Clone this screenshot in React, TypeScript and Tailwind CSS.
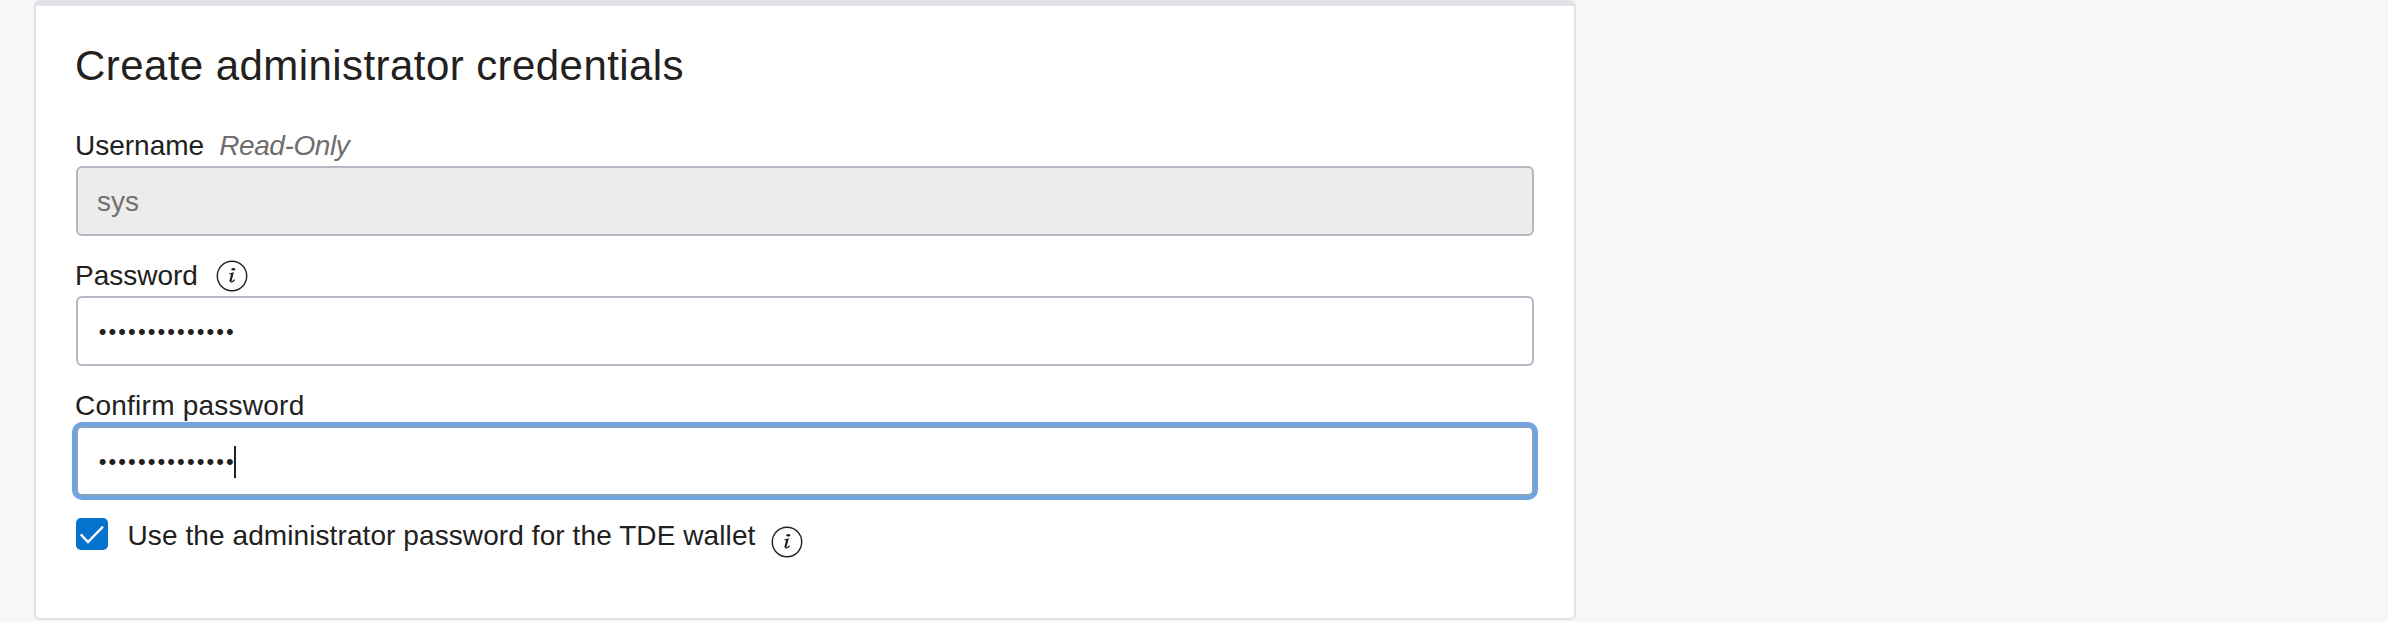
import type { ReactNode } from "react";

function InfoIcon({ className = "" }: { className?: string }) {
  return (
    <svg className={`h-8 w-8 shrink-0 ${className}`} viewBox="0 0 32 32" fill="none" stroke="#222120">
      <circle cx="16" cy="16" r="14.7" strokeWidth="1.4" />
      <ellipse cx="17.3" cy="9.3" rx="1.9" ry="1.2" fill="#222120" stroke="none" />
      <path d="M13.4 13.8 Q15.2 13.8 17 13 L14.6 20.8 Q14.4 22.3 15.6 22 Q17.4 21.4 18.6 19.6" strokeWidth="1.1" />
      <path d="M16.4 13.3 L14.3 21.6" strokeWidth="2.1" />
    </svg>
  );
}

function Field({ label, children }: { label: ReactNode; children: ReactNode }) {
  return (
    <div className="flex flex-col gap-1">
      <div className="flex h-8 items-center">{label}</div>
      {children}
    </div>
  );
}

function Dots() {
  return <span className="pt-0.5 text-[22px] tracking-[2.1px]">••••••••••••••</span>;
}

const box = "flex h-[70px] items-center rounded-[6px] border-2 border-[#b2b7c2]";

export default function App() {
  return (
    <main className="h-[622px] overflow-hidden bg-[#f7f7f7] pl-[34px] font-['Liberation_Sans',Arial,sans-serif] text-[28px] leading-8 whitespace-nowrap text-[#222120]">
      <section className="h-[620px] w-[1542px] rounded-[6px] border-2 border-t-[6px] border-[#e1e2e7] bg-white px-10 pt-[36px]">
        <h1 className="-ml-px text-[42px] leading-[48px] tracking-[0.43px]">Create administrator credentials</h1>
        <div className="mt-[40px] flex flex-col gap-6">
          <Field
            label={
              <>
                <span className="-ml-px">Username</span>
                <span className="ml-[15px] tracking-[-0.4px] text-[#6f6d6b] italic">Read-Only</span>
              </>
            }
          >
            <div className={`${box} bg-[#ececec] pt-0.5 pl-[19px] text-[#74716e]`}>sys</div>
          </Field>
          <Field
            label={
              <>
                <span className="-ml-px">Password</span>
                <InfoIcon className="ml-[18px]" />
              </>
            }
          >
            <div className={`${box} bg-white pl-[20.7px]`}>
              <Dots />
            </div>
          </Field>
          <Field label={<span className="-ml-px tracking-[0.24px]">Confirm password</span>}>
            <div className="flex h-[70px] items-center rounded-[6px] border-2 border-[#85a5c4] bg-white pl-[20.7px] ring-4 ring-[#71a3df]">
              <Dots />
              <span className="mt-0.5 -ml-[2.2px] h-8 w-0.5 bg-[#222120]" />
            </div>
          </Field>
        </div>
        <div className="mt-[22px] flex h-9 items-start">
          <svg className="h-8 w-8" viewBox="0 0 32 32" fill="none">
            <rect width="32" height="32" rx="5" fill="#0572ce" />
            <path d="M4.8 16.4 L12 24 L27 8.6" stroke="#fff" strokeWidth="2.4" />
          </svg>
          <span className="mt-0.5 ml-[19.5px] tracking-[0.09px]">Use the administrator password for the TDE wallet</span>
          <InfoIcon className="mt-2 ml-4" />
        </div>
      </section>
    </main>
  );
}
